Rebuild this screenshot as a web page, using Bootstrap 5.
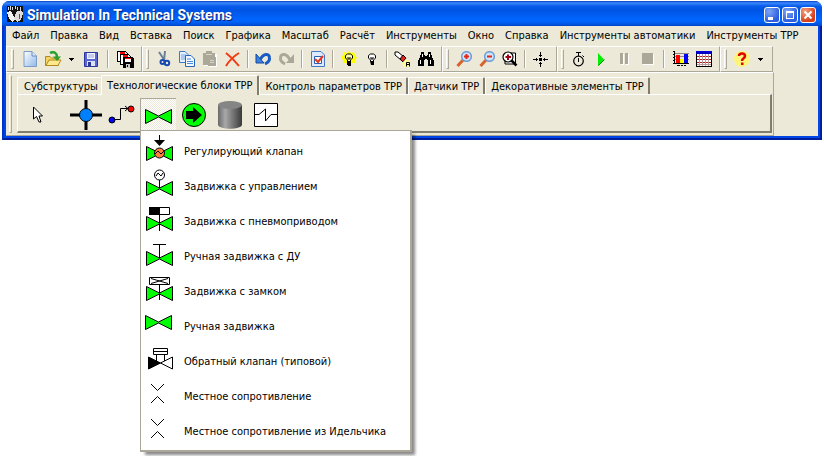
<!DOCTYPE html>
<html lang="ru">
<head>
<meta charset="utf-8">
<meta name="viewport" content="width=device-width, initial-scale=1">
<title>Simulation In Technical Systems</title>
<link rel="stylesheet" href="https://cdn.jsdelivr.net/npm/bootstrap@5.3.0/dist/css/bootstrap.min.css">
<style>
body{background:#fff;color:#000;font-family:"DejaVu Sans Condensed","Noto Sans",sans-serif;font-size:11px;line-height:16px;padding:1px 2px 0}
button{font:inherit;color:inherit;border:0;background:none;padding:0}
svg{display:block;flex:none}
.app{border:2px solid #001f9c;border-left-color:#0034d0;border-top:0;border-radius:8px 8px 0 0;padding:0 2px 2px;box-shadow:inset 0 0 0 2px #0046e6;background:#ece9d8}
.caption{height:25px;margin:0 -4px;padding:0 6px 0 5px;border-radius:7px 7px 0 0;background:linear-gradient(#0840c0 0,#3a8bff 2px,#0a5de8 5px,#0054e3 9px,#0062fa 17px,#0066ff 20px,#0050d8 24px,#003fbf 25px)}
.caption h1{font-family:Roboto,"Open Sans",sans-serif;font-size:14px;line-height:24px;font-weight:700;color:#fff;text-shadow:1px 1px 0 #0a246a;margin:3px 0 0 4px}
.capbtns{gap:2px}
.capbtn{width:16px;height:16px;border:1px solid #fff;border-radius:3px;background:radial-gradient(circle at 30% 25%,#7da6f5,#2c5fe0 70%);margin-top:3px}
.capbtn.x{background:radial-gradient(circle at 30% 25%,#f0a080,#d8401c 70%)}
.mainmenu{height:20px;padding:2px 6px 0;gap:11px}
.mainmenu a{color:#000;text-decoration:none;white-space:nowrap}
.tools{height:26px}
.tgroup{height:26px;border-top:1px solid #fff;border-left:1px solid #fff;border-right:1px solid #aca899;border-bottom:1px solid #aca899;padding:0 4px 0 3px}
.grip{width:3px;height:20px;margin-right:3px;border:1px solid;border-color:#fff #aca899 #aca899 #fff}
.tb{width:23px;height:24px;display:flex;align-items:center;justify-content:center}
.dd{width:15px}
.vsep{width:2px;height:18px;margin:0 3px;border-left:1px solid #aca899;border-right:1px solid #fff}
.vsep.wide{margin:0 4px}
.tgroup:first-child .vsep.wide{margin:0 5px}
.dock{width:768px;max-width:100%;border-top:1px solid #fff;border-right:1px solid #aca899;border-bottom:1px solid #aca899;padding:2px 1px 2px 3px}
.dock>.grip{height:auto;margin:0 5px 0 0}
.tabs .tab{height:17px;line-height:17px;padding:0 4px 0 5px;border-top:1px solid #fff;border-left:1px solid #fff;border-right:2px solid #817d6e;border-radius:2px 2px 0 0;white-space:nowrap}
.tabs .tab:first-child{padding:0 3px 0 6px}
.tabs .tab.on{height:20px;line-height:16px;margin-bottom:-1px;padding:1px 5px 0;background:#ece9d8;position:relative}
.sheet{border:2px solid;border-color:#fff #817d6e #817d6e #fff;border-width:1px 2px 2px 1px;height:39px;padding:3px 0 0 2px}
.pal{width:36px;height:33px;display:flex;align-items:center;justify-content:center}
.pal.pointer{margin-right:12px}
.pal.down{border-top:1px solid #aca899;border-left:1px solid #aca899;padding-top:2px;background:repeating-conic-gradient(#fff 0 25%,#ece9d8 0 50%) 0 0/2px 2px}
.drop{top:32px;left:0;width:272px;background:#fff;border:1px solid #aca899;border-width:1px 2px 2px 1px;box-shadow:4px 4px 3px -1px #0007;padding:3px 0 1px;z-index:5}
.drop button{display:flex;align-items:center;height:35px;width:100%;text-align:left;white-space:nowrap;padding-left:3px;gap:8px}
.drop svg{align-self:flex-start}
</style>
<script src="https://cdn.jsdelivr.net/npm/bootstrap@5.3.0/dist/js/bootstrap.bundle.min.js"></script>
</head>
<body class="min-vh-100">
<svg width="0" height="0" class="position-absolute" aria-hidden="true">
<defs>
<linearGradient id="gp" x1="0" y1="0" x2="1" y2="1"><stop offset="0" stop-color="#fff"/><stop offset="1" stop-color="#8fb8e8"/></linearGradient>
<linearGradient id="gc" x1="0" x2="1"><stop offset="0" stop-color="#6a6a6a"/><stop offset=".3" stop-color="#a8a8a8"/><stop offset="1" stop-color="#3a3a3a"/></linearGradient>
<g id="bow"><path d="M.5 .5V14.500L13.500 8 26.500 14.500V.5L13.500 7Z" fill="#0f0" stroke="#000"/></g>
<g id="mag"><path d="M1.500 15 7.500 8.500" stroke="#d8622a" stroke-width="3"/><circle cx="10.500" cy="5.500" r="4.800" fill="#cfe4fb" stroke="#6b9bd8" stroke-width="1.500"/></g>
<path id="dn" d="M0 0H5V1H4V2H3V3H2V2H1V1H0Z"/>
<g id="floppy"><path d="M.5 .5H8.500L10.500 2.500V10.500H.5Z" fill="#fff" stroke="#000"/><path d="M3 1H8V3H3Z" fill="#f00"/></g>
</defs>
</svg>

<main class="app">
<header class="caption d-flex align-items-center">
<svg width="16" height="16" shape-rendering="crispEdges"><path d="M0 0H16V16H0Z" fill="#111"/><path d="M1.500 1V4M3.500 0V4M5.500 1V4M8.500 0V3M10.500 1V4M13.500 1V4" stroke="#ddd"/><path d="M0 6 4 5 8 13 6 16 2 13Z" fill="#f2f2f2"/><path d="M7 13 9 6 14 4 16 7 14 14 10 16Z" fill="#dcdcdc"/><path d="M12.500 8V13" stroke="#a33"/></svg>
<h1 class="flex-grow-1">Simulation In Technical Systems</h1>
<div class="capbtns d-flex">
<button class="capbtn" aria-label="Свернуть"><svg width="14" height="14"><path d="M3 9H8V12H3Z" fill="#fff"/></svg></button>
<button class="capbtn" aria-label="Развернуть"><svg width="14" height="14" shape-rendering="crispEdges"><path d="M3.500 4.500H10.500V10.500H3.500Z" fill="none" stroke="#fff"/><path d="M3 3.500H11" stroke="#fff"/></svg></button>
<button class="capbtn x" aria-label="Закрыть"><svg width="14" height="14"><path d="M3.500 3.500 10.500 10.500M10.500 3.500 3.500 10.500" stroke="#fff" stroke-width="2"/></svg></button>
</div>
</header>

<nav class="mainmenu d-flex" aria-label="Главное меню">
<a href="#">Файл</a><a href="#">Правка</a><a href="#">Вид</a><a href="#">Вставка</a><a href="#">Поиск</a><a href="#">Графика</a><a href="#">Масштаб</a><a href="#">Расчёт</a><a href="#">Инструменты</a><a href="#">Окно</a><a href="#">Справка</a><a href="#">Инструменты автоматики</a><a href="#">Инструменты ТРР</a>
</nav>

<div class="tools d-flex" role="toolbar">
<div class="tgroup d-flex align-items-center px-1"><span class="grip me-1"></span>
<button class="tb" aria-label="Создать"><svg width="16" height="16"><path d="M2 .5H10L14.500 5V15.500H2Z" fill="url(#gp)" stroke="#7c9cc8"/><path d="M10 .5V5H14.500" fill="#dceafa" stroke="#6a8cbc"/></svg></button>
<button class="tb" aria-label="Открыть"><svg width="18" height="16"><path d="M1.500 14.500V5.500H6L7.500 7H14.500V14.500Z" fill="#f3d364" stroke="#b08a1c"/><path d="M2 14.500 5 9H17L14 14.500Z" fill="#ffe98c" stroke="#b08a1c"/><path d="M6 2C10 0 13 2 13 6" fill="none" stroke="#2ba02b" stroke-width="2.500"/><path d="M9 5.500H17L13 10Z" fill="#2ba02b"/></svg></button>
<button class="tb dd" aria-label="Открыть недавние"><svg width="5" height="3"><use href="#dn"/></svg></button>
<button class="tb" aria-label="Сохранить"><svg width="14" height="15"><path d="M.5 .5H13.500V14.500H.5Z" fill="#5a67d0" stroke="#2c359c"/><path d="M3 1H11V7H3Z" fill="#f2f4ff"/><path d="M4 3H10M4 5H10" stroke="#98a4dc"/><path d="M3 9H11V14H3Z" fill="#dde1f6"/><path d="M4 10H7V14H4Z" fill="#2c359c"/></svg></button>
<span class="vsep wide"></span>
<button class="tb" aria-label="Сохранить все"><svg width="17" height="17" shape-rendering="crispEdges"><use href="#floppy"/><use href="#floppy" x="3" y="3"/><path d="M6 6H15L17 8V17H6Z"/><path d="M8 7H14V11H8Z" fill="#fff"/><path d="M8 7H14V8H8Z" fill="#f00"/><path d="M9 13H13V17H9Z" fill="#ccc"/><path d="M10 14H11V16H10Z"/></svg></button>
</div>
<div class="tgroup d-flex align-items-center"><span class="grip"></span>
<button class="tb" aria-label="Вырезать"><svg width="14" height="16"><path d="M2 1 8 10M8 0 7 10" stroke="#6b7f99" stroke-width="2"/><circle cx="5.500" cy="11" r="2" fill="none" stroke="#1648b0" stroke-width="2"/><circle cx="10" cy="12" r="2.200" fill="none" stroke="#1648b0" stroke-width="2"/></svg></button>
<button class="tb" aria-label="Копировать"><svg width="16" height="16"><path d="M.5 .5H6L9.500 4V11.500H.5Z" fill="#e5f0ff" stroke="#3c78c8"/><path d="M2 4H7M2 6H7M2 8H7" stroke="#6ea4e4"/><path d="M6.500 4.500H12L15.500 8V15.500H6.500Z" fill="#f2f8ff" stroke="#2a66b8"/><path d="M8 8H12M8 10.500H14M8 12.500H14" stroke="#4a8be0"/></svg></button>
<button class="tb" aria-label="Вставить"><svg width="16" height="16"><path d="M2 3H15V12H15V16H7V15H2Z" fill="#fff"/><path d="M1 2H4V0H10V2H13V6H14V15H6V14H1Z" fill="#aca899"/><path d="M4 3.500H10M8 9.500H12M8 11.500H12" stroke="#d8d5c5"/></svg></button>
<button class="tb" aria-label="Удалить"><svg width="15" height="15"><path d="M1 1C5 4 10 9 14 14M14 1C9 4 4 9 1 14" fill="none" stroke="#f03c14" stroke-width="2"/></svg></button>
<span class="vsep"></span>
<button class="tb" aria-label="Отменить"><svg width="17" height="14"><path d="M5 8C8 1 14 1 14.500 5.500 15 9 12 11 10 12" fill="none" stroke="#1a5ac4" stroke-width="3"/><path d="M1 2V11H9Z" fill="#3b82e4" stroke="#1547a0"/></svg></button>
<button class="tb" aria-label="Вернуть"><svg width="17" height="14"><path d="M12 8C9 1 3 1 2.500 5.500 2 9 5 11 7 12" fill="none" stroke="#aca899" stroke-width="3"/><path d="M16 2V11H8Z" fill="#aca899"/></svg></button>
<span class="vsep"></span>
<button class="tb" aria-label="Свойства"><svg width="14" height="16"><path d="M.5 .5H10L13.500 4V15.500H.5Z" fill="#dceaff" stroke="#4678c4"/><path d="M3.500 5.500H10.500V12.500H3.500Z" fill="#fff" stroke="#2a5cb0"/><path d="M4 8 7 11 12 5" fill="none" stroke="#e8341c" stroke-width="2"/></svg></button>
<span class="vsep"></span>
<button class="tb" aria-label="Показать подсказки"><svg width="16" height="16"><path d="M8 0 10 2 13 1 14 4 16 7 14 9 14 12 11 12 8 14 5 12 2 12 2 9 0 7 2 4 3 1 6 2Z" fill="#ff0"/><path d="M6.500 10V9L4.500 7V4.500L6.500 3H9.500L11.500 4.500V7L9.500 9V10" fill="#ffa" stroke="#000"/><path d="M6 10H10V15H7V14H6Z"/><path d="M7 6V8H9V6" stroke="#000" fill="none"/></svg></button>
<button class="tb" aria-label="Скрыть подсказки"><svg width="10" height="16"><path d="M3.500 10V9L1.500 7V4.500L3.500 3H6.500L8.500 4.500V7L6.500 9V10" fill="#fff" stroke="#000"/><path d="M3 10H7V14H4Z"/><path d="M4 6V8H6V6" stroke="#000" fill="none"/></svg></button>
<span class="vsep"></span>
<button class="tb" aria-label="Найти текст"><svg width="17" height="16"><path d="M1 1H4L10 6 7 9 1 4Z" fill="#fff" stroke="#000"/><path d="M6 8 9 4 12 7 9 11Z" fill="#e32222" stroke="#000"/><path d="M8 12 12 8 16 10V16H9Z" fill="#fff6a0"/><path d="M12.500 15.500V11.500H15.500V15.500M13 13.500H15" stroke="#000" fill="none"/></svg></button>
<button class="tb" aria-label="Поиск"><svg width="16" height="14" shape-rendering="crispEdges"><path d="M3 0H6V3H7V4H9V3H10V0H13V3H14V6H15V8H16V14H10V8H9V7H7V8H6V14H0V8H1V6H2V3H3Z"/><path d="M4.500 2V5M2.500 8V12M11.500 2V5M12.500 8V12" stroke="#fff"/></svg></button>
</div>
<div class="tgroup d-flex align-items-center"><span class="grip"></span>
<button class="tb" aria-label="Увеличить"><svg width="16" height="16"><use href="#mag"/><path d="M8 5.500H13M10.500 3V8" stroke="#e02a1a" stroke-width="2"/></svg></button>
<button class="tb" aria-label="Уменьшить"><svg width="16" height="16"><use href="#mag"/><path d="M8 5.500H13" stroke="#e02a1a" stroke-width="2"/></svg></button>
<button class="tb" aria-label="Показать всё"><svg width="16" height="16"><path d="M3 2H13.500V13H3Z" fill="#fff" stroke="#000"/><circle cx="6" cy="6" r="5" fill="#fff" stroke="#000" stroke-width="1.200"/><path d="M3.500 6H9M6 3.500V9" stroke="#a00010" stroke-width="2"/><path d="M9.500 9.500 14.500 14.500" stroke="#000" stroke-width="2.500"/></svg></button>
<span class="vsep"></span>
<button class="tb" aria-label="По центру"><svg width="15" height="15" shape-rendering="crispEdges"><path d="M6 6H9V9H6ZM7 0H8V3H9V4H8V5H7V4H6V3H7ZM7 15H8V12H9V11H8V10H7V11H6V12H7ZM0 7H3V6H4V7H5V8H4V9H3V8H0ZM15 7H12V6H11V7H10V8H11V9H12V8H15Z"/></svg></button>
</div>
<div class="tgroup d-flex align-items-center"><span class="grip"></span>
<button class="tb" aria-label="Таймер"><svg width="13" height="15"><path d="M4 .5H9M6.500 .5V4M6.500 6V10" stroke="#000"/><circle cx="6.500" cy="9" r="4.800" fill="none" stroke="#000" stroke-width="1.200"/><path d="M10.500 3.500 12 5" stroke="#000"/></svg></button>
<button class="tb" aria-label="Пуск"><svg width="7" height="13"><path d="M0 0 6 6.500 0 13Z" fill="#0e0"/><path d="M.5 12.500 6.500 6.500" stroke="#080"/></svg></button>
<button class="tb" aria-label="Пауза"><svg width="9" height="12" shape-rendering="crispEdges"><path d="M1 1H4V12H1ZM6 1H9V12H6Z" fill="#fff"/><path d="M0 0H3V11H0ZM5 0H8V11H5Z" fill="#aca899"/></svg></button>
<button class="tb" aria-label="Стоп"><svg width="12" height="12" shape-rendering="crispEdges"><path d="M1 1H12V12H1Z" fill="#fff"/><path d="M0 0H11V11H0Z" fill="#aca899"/></svg></button>
<span class="vsep wide"></span>
<button class="tb" aria-label="Графики"><svg width="16" height="16" shape-rendering="crispEdges"><path d="M2 2.500H16M2 5.500H16M2 8.500H16" stroke="#888"/><path d="M1.500 0V13M0 .5H2M0 3.500H2M0 6.500H2M0 9.500H2M0 12.500H16" stroke="#000"/><path d="M3 4H7V12H3Z" fill="#f00"/><path d="M7 8H11V12H7Z" fill="#ff0"/><path d="M11 3H15V12H11Z" fill="#00f"/><path d="M4 14.500H7M8 14.500H10M11 14.500H13" stroke="#000"/></svg></button>
<button class="tb" aria-label="Таблица"><svg width="16" height="16" shape-rendering="crispEdges"><path d="M.5 .5H15.500V15.500H.5Z" fill="#fff" stroke="#000"/><path d="M0 0H16V3H0Z" fill="#00c"/><path d="M1 5.500H15M1 8.500H15M1 11.500H15" stroke="#a22" stroke-dasharray="2 1"/><path d="M3.500 3V15M6.500 3V15M9.500 3V15M12.500 3V15M1 13.500H15" stroke="#b99"/></svg></button>
</div>
<div class="tgroup d-flex align-items-center"><span class="grip"></span>
<button class="tb" aria-label="Помощь"><svg width="16" height="16"><circle cx="8" cy="8" r="8" fill="#fff47a"/><path d="M5 5C5 1.500 11 1.500 11 5 11 7.500 8 7 8 10" fill="none" stroke="#e00000" stroke-width="2.500"/><path d="M7 11.500H9.500V14H7Z" fill="#e00000"/></svg></button>
<button class="tb dd" aria-label="Разделы справки"><svg width="5" height="3"><use href="#dn"/></svg></button>
</div>
</div>

<div class="dock d-flex">
<span class="grip"></span>
<section class="flex-grow-1">
<div class="tabs d-flex align-items-end" role="tablist">
<button class="tab border-end-0" role="tab">Субструктуры</button><button class="tab on" role="tab" aria-selected="true">Технологические блоки ТРР</button><button class="tab" role="tab">Контроль параметров ТРР</button><button class="tab" role="tab">Датчики ТРР</button><button class="tab" role="tab">Декоративные элементы ТРР</button>
</div>
<div class="sheet d-flex" role="tabpanel">
<button class="pal pointer" aria-label="Указатель"><svg width="12" height="18"><path d="M1.500 1V13L4.500 10.500 7 16H9L7 10H10.500Z" fill="#fff" stroke="#000"/></svg></button>
<button class="pal" aria-label="Узел"><svg width="34" height="32"><path d="M1 16H33M17 1V31" stroke="#000" stroke-width="3"/><circle cx="17" cy="16" r="6.500" fill="#0080ff" stroke="#000"/></svg></button>
<button class="pal" aria-label="Связь"><svg width="28" height="20"><path d="M5 14.500H12.500V3.500H22M17 1 20 3.500 17 6" fill="none" stroke="#000"/><circle cx="4" cy="15" r="3" fill="#00f" stroke="#000"/><circle cx="23" cy="4" r="3" fill="#f00" stroke="#000"/></svg></button>
<div class="position-relative">
<button class="pal down" aria-label="Арматура" aria-expanded="true"><svg width="27" height="15"><use href="#bow"/></svg></button>
<div class="drop position-absolute" role="menu">
<button role="menuitem"><svg width="32" height="32"><g transform="translate(2 12)"><use href="#bow"/></g><path d="M15.500 1V6" stroke="#000"/><path d="M10 6H21L15.500 12Z"/><circle cx="15.500" cy="19" r="5" fill="#ff8040" stroke="#000"/><path d="M11 20 14 17 17 20 20 17" fill="none" stroke="#000"/></svg>Регулирующий клапан</button>
<button role="menuitem"><svg width="32" height="32"><g transform="translate(2 12)"><use href="#bow"/></g><path d="M15.500 10V20" stroke="#000"/><circle cx="15.500" cy="6" r="5" fill="#fff" stroke="#000"/><path d="M12 7 14 4 17 7 19 4" fill="none" stroke="#000"/></svg>Задвижка с управлением</button>
<button role="menuitem"><svg width="32" height="32"><g transform="translate(2 12)"><use href="#bow"/></g><path d="M15.500 10V27" stroke="#000"/><path d="M5.500 3.500H25.500V10.500H5.500Z" fill="#fff" stroke="#000"/><path d="M5 3H16V11H5Z"/></svg>Задвижка с пневмоприводом</button>
<button role="menuitem"><svg width="32" height="32"><g transform="translate(2 12)"><use href="#bow"/></g><path d="M15.500 5V20M9 5.500H22" stroke="#000"/></svg>Ручная задвижка с ДУ</button>
<button role="menuitem"><svg width="32" height="32"><g transform="translate(2 12)"><use href="#bow"/></g><path d="M15.500 10V26" stroke="#000"/><path d="M5.500 3.500H25.500V10.500H5.500Z" fill="#fff" stroke="#000"/><path d="M7 4.500 24 9.500M24 4.500 7 9.500" stroke="#000"/></svg>Задвижка с замком</button>
<button role="menuitem"><svg width="32" height="32"><g transform="translate(1 6)"><use href="#bow"/></g></svg>Ручная задвижка</button>
<button role="menuitem"><svg width="32" height="32"><path d="M4.500 13V25L16.500 19Z" stroke="#000"/><path d="M28.500 13V25L16.500 19Z" fill="#fff" stroke="#000"/><path d="M9.500 4.500H23.500V10.500H9.500ZM9.500 7.500H23.500M12.500 11V17M20.500 11V17" fill="none" stroke="#000"/></svg>Обратный клапан (типовой)</button>
<button role="menuitem"><svg width="32" height="32"><path d="M7 5 13.500 11.500 20 5M7 24 13.500 17.500 20 24" fill="none" stroke="#000"/></svg>Местное сопротивление</button>
<button role="menuitem"><svg width="32" height="32"><path d="M7 5 13.500 11.500 20 5M7 24 13.500 17.500 20 24" fill="none" stroke="#000"/></svg>Местное сопротивление из Идельчика</button>
</div>
</div>
<button class="pal" aria-label="Насос"><svg width="26" height="26"><circle cx="13" cy="13" r="11.500" fill="#0f0" stroke="#000"/><path d="M5 9H12V5L21 13 12 21V17H5Z"/></svg></button>
<button class="pal" aria-label="Бак"><svg width="24" height="28"><path d="M0 4V24C2 29 22 29 24 24V4Z" fill="url(#gc)"/><ellipse cx="12" cy="4" rx="12" ry="4" fill="#858585"/></svg></button>
<button class="pal" aria-label="График"><svg width="24" height="24"><path d="M.5 .5H23.500V23.500H.5Z" fill="#fff" stroke="#000"/><path d="M0 11.500H5L11.500 6V18L17 11.500H24" fill="none" stroke="#000"/></svg></button>
</div>
</section>
</div>
</main>
</body>
</html>
